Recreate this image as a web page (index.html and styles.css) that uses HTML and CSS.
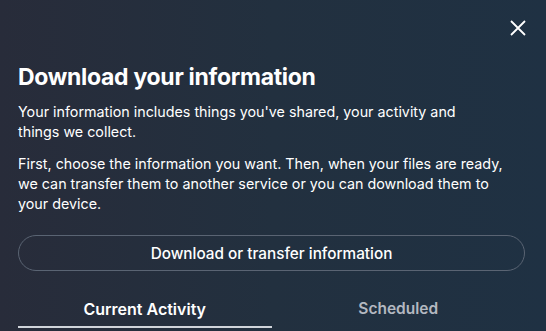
FILE: index.html
```html
<!DOCTYPE html>
<html lang="en">
<head>
    <meta charset="UTF-8">
    <meta name="viewport" content="width=device-width, initial-scale=1.0">
    <title>Download your information</title>
    <link rel="stylesheet" href="styles.css">
</head>
<body>
    <div class="dialog">
        <div class="top-bar">
            <button class="close-btn" aria-label="Close">
                <svg width="18" height="18" viewBox="0 0 18 18">
                    <path d="M2 2 L16 16 M16 2 L2 16" stroke="#fff" stroke-width="1.8" fill="none"/>
                </svg>
            </button>
        </div>

        <h1>Download your information</h1>
        <p class="intro">Your information includes things you've shared, your activity and things we collect.</p>
        <p>First, choose the information you want. Then, when your files are ready, we can transfer them to another service or you can download them to your device.</p>

        <button class="action-btn">Download or transfer information</button>

        <div class="tabs">
            <div class="tab active">Current Activity</div>
            <div class="tab">Scheduled</div>
        </div>
    </div>
</body>
</html>
```

FILE: styles.css
```css
body {
    margin: 0;
    font-family: 'Inter', 'Noto Sans', sans-serif;
    color: #fff;
    background: linear-gradient(90deg, #282c3a 0%, #22303f 50%, #1f3143 100%);
    height: 331px;
    overflow: hidden;
}

.dialog {
    padding: 0 21px 0 18px;
}

.top-bar {
    display: flex;
    justify-content: flex-end;
    padding-top: 19px;
    margin-right: -2px;
}

.close-btn {
    background: none;
    border: none;
    padding: 0;
    width: 18px;
    height: 18px;
    cursor: pointer;
}

h1 {
    font-size: 23px;
    font-weight: 700;
    margin: 26px 0 11px;
    letter-spacing: -0.3px;
}

p {
    font-size: 14.3px;
    line-height: 20px;
    margin: 0 22px 12px 0;
}

.intro {
    margin-right: 50px;
}

.action-btn {
    display: block;
    width: 100%;
    height: 36px;
    margin-top: 21px;
    background: transparent;
    border: 1px solid #5a6473;
    border-radius: 18px;
    color: #fff;
    font-family: inherit;
    font-size: 15.3px;
    font-weight: 500;
    cursor: pointer;
}

.tabs {
    display: grid;
    grid-template-columns: 1fr 1fr;
    margin-top: 28px;
}

.tab {
    text-align: center;
    font-size: 15.5px;
    font-weight: 600;
    color: #b3b8c0;
    padding-bottom: 7px;
}

.tab.active {
    font-size: 16px;
    color: #fff;
    border-bottom: 2px solid #d0d4da;
}
```
